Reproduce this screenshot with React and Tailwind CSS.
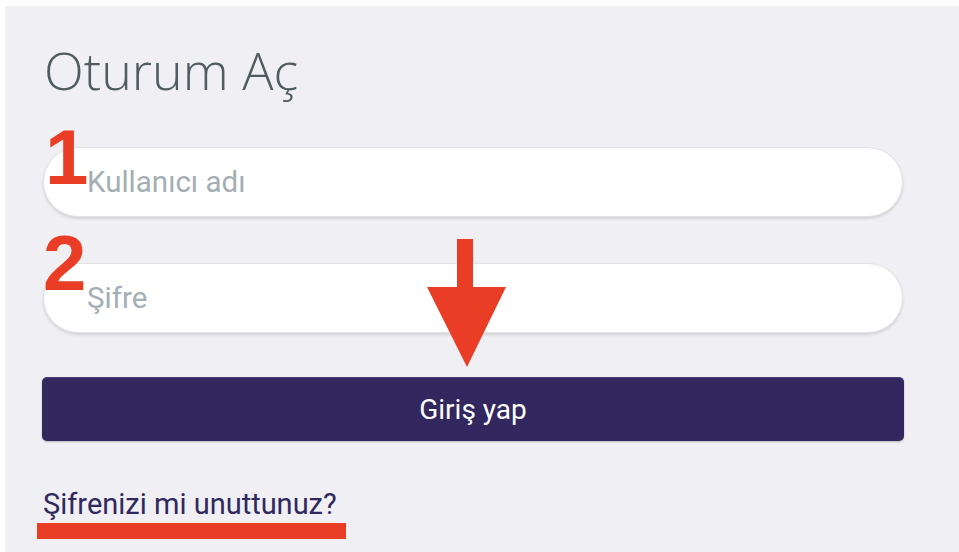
import React from 'react';

const roboto = { fontFamily: 'Roboto, "Liberation Sans", sans-serif' };
const markFont = { fontFamily: '"Liberation Sans", Arial, sans-serif' };

const Field = ({ placeholder, type = 'text' }) => (
  <input
    type={type}
    placeholder={placeholder}
    style={roboto}
    className="block w-full h-[70px] rounded-full bg-white border border-[#e3e3e6] shadow-[0_2px_3px_rgba(0,0,0,0.12)] pl-[43px] pr-6 text-[29.5px] text-[#37474f] placeholder:text-[#a4aeb4] outline-none"
  />
);

export default function App() {
  return (
    <div className="w-full h-[552px] bg-white pt-[6px] pl-[5px]">
      <div className="relative h-full bg-[#f0eff4] pt-[38px] pl-[37px] pr-[55px] flex flex-col items-stretch">
        <h1
          className="text-[52px] leading-[52px] font-light text-[#4f5c60] ml-[2px]"
          style={{ fontFamily: '"Open Sans", sans-serif' }}
        >
          Oturum Aç
        </h1>

        <div className="mt-[51px] mx-px flex flex-col gap-[46px]">
          <Field placeholder="Kullanıcı adı" />
          <Field placeholder="Şifre" type="password" />
        </div>

        <button
          style={roboto}
          className="mt-[44px] w-full h-[64px] rounded-[5px] bg-[#32275e] border-t border-[#4a3f78] shadow-[0_1px_2px_rgba(0,0,0,0.25)] text-white text-[28px]"
        >
          Giriş yap
        </button>

        <div className="mt-[49px] ml-[1px] flex">
          <a href="#" style={roboto} className="text-[29px] leading-[29px] text-[#2f295e]">
            Şifrenizi mi unuttunuz?
          </a>
        </div>

        {/* red markup drawn over the form */}
        <span className="absolute left-[40px] top-[112px] text-[78px] leading-[78px] font-bold text-[#e93d25]" style={markFont}>
          1
        </span>
        <span className="absolute left-[38px] top-[218px] text-[78px] leading-[78px] font-bold text-[#e93d25]" style={markFont}>
          2
        </span>
        <svg className="absolute left-[422px] top-[233px]" width="79" height="128" viewBox="0 0 79 128">
          <rect x="30" y="0" width="16" height="50" fill="#e93d25" />
          <polygon points="0,48 79,48 40,128" fill="#e93d25" />
        </svg>
        <div className="absolute left-[32px] top-[517px] w-[309px] h-[16px] bg-[#e93d25]" />
      </div>
    </div>
  );
}
